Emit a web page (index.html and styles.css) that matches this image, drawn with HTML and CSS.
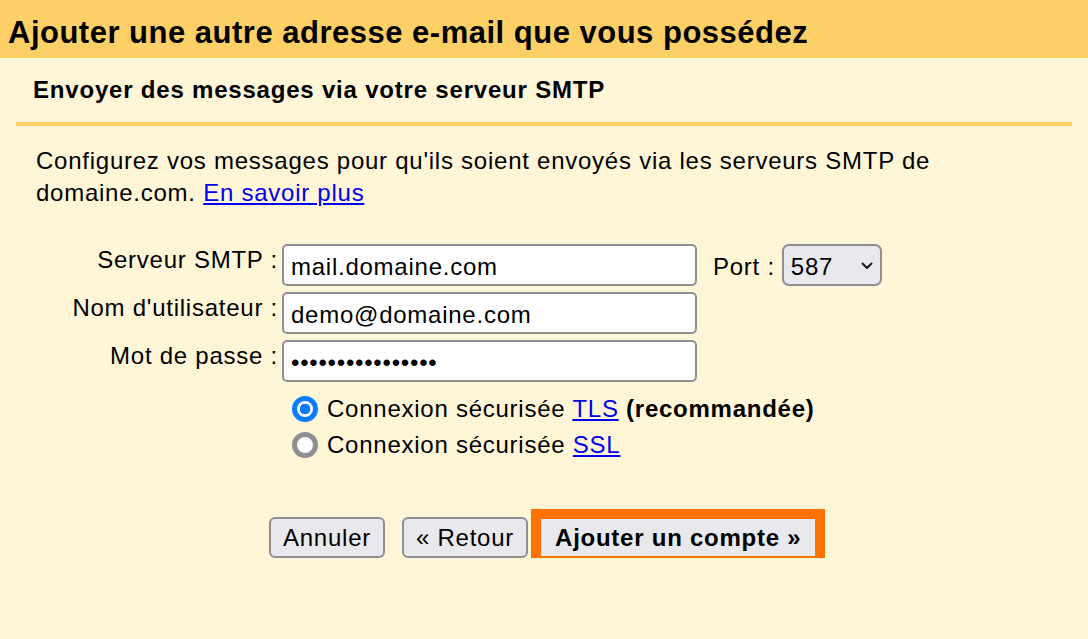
FILE: index.html
```html
<!DOCTYPE html>
<html lang="fr">
<head>
<meta charset="utf-8">
<title>Ajouter une autre adresse e-mail que vous possédez</title>
<link rel="stylesheet" href="styles.css">
</head>
<body>
<header class="top">
  <h1 class="title">Ajouter une autre adresse e-mail que vous possédez</h1>
</header>
<main class="panel">
  <h2 class="subtitle">Envoyer des messages via votre serveur SMTP</h2>
  <p class="intro">Configurez vos messages pour qu'ils soient envoyés via les serveurs SMTP de domaine.com. <a class="link" href="#">En savoir plus</a></p>
  <form class="form">
    <div class="row">
      <label class="label" for="smtp">Serveur SMTP :</label>
      <input class="field" id="smtp" type="text" value="mail.domaine.com">
      <span class="port-label">Port :</span>
      <div class="select-wrap">
        <select class="select"><option>587</option><option>465</option><option>25</option></select>
        <svg class="chevron" width="12" height="8" viewBox="0 0 12 8"><path d="M1.5 1.5 L6 6 L10.5 1.5" fill="none" stroke="#1a1a1a" stroke-width="2" stroke-linecap="round" stroke-linejoin="round"/></svg>
      </div>
    </div>
    <div class="row">
      <label class="label" for="user">Nom d'utilisateur :</label>
      <input class="field" id="user" type="text" value="demo@domaine.com">
    </div>
    <div class="row">
      <label class="label" for="pass">Mot de passe :</label>
      <input class="field" id="pass" type="password" value="motdepasse123456">
    </div>
    <div class="radios">
      <label class="radio-row"><input class="radio" type="radio" name="sec" checked><span class="radio-text">Connexion sécurisée <a class="link" href="#">TLS</a> <b>(recommandée)</b></span></label>
      <label class="radio-row"><input class="radio" type="radio" name="sec"><span class="radio-text">Connexion sécurisée <a class="link" href="#">SSL</a></span></label>
    </div>
    <div class="actions">
      <button class="btn" type="button">Annuler</button>
      <button class="btn btn-back" type="button">« Retour</button>
      <button class="btn btn-primary" type="button">Ajouter un compte »</button>
    </div>
  </form>
</main>
</body>
</html>
```
FILE: styles.css
```css
html, body {
  margin: 0;
  padding: 0;
}
body {
  background: #fff6d8;
  font-family: "Liberation Sans", Arial, sans-serif;
  font-size: 24px;
  letter-spacing: 0.75px;
  color: #000;
}
.top {
  background: #fcd066;
  height: 58px;
  padding-left: 8px;
}
.title {
  margin: 0;
  padding-top: 7px;
  font-size: 31px;
  line-height: 51px;
  font-weight: bold;
  letter-spacing: 0.5px;
  white-space: nowrap;
}
.panel {
  margin: 0 16px;
}
.subtitle {
  margin: 0;
  padding: 16px 17px;
  font-size: 24px;
  line-height: 32px;
  font-weight: bold;
  letter-spacing: 0.8px;
  border-bottom: 4px solid #fcd066;
}
.intro {
  margin: 19px 0 0;
  padding: 0 20px;
  line-height: 32px;
}
.link {
  color: #0000ee;
  text-decoration: underline;
}
.form {
  margin-top: 35px;
  padding-left: 20px;
}
.row {
  display: flex;
  align-items: flex-start;
  margin-bottom: 6px;
}
.label {
  width: 242px;
  text-align: right;
  line-height: 32px;
}
.field {
  display: block;
  width: 415px;
  height: 42px;
  box-sizing: border-box;
  margin: 0 0 0 4px;
  padding: 3px 7px 0;
  border: 2px solid #8e8e93;
  border-radius: 5px;
  background: #fff;
  font: inherit;
  letter-spacing: inherit;
  color: #000;
  outline: none;
}
.port-label {
  margin-left: 16px;
  padding-top: 3px;
  line-height: 39px;
}
.select-wrap {
  position: relative;
  display: flex;
  margin-left: 7px;
}
.select {
  display: block;
  appearance: none;
  -webkit-appearance: none;
  width: 100px;
  height: 42px;
  box-sizing: border-box;
  margin: 0;
  padding: 3px 0 0 7px;
  border: 2px solid #8e8e93;
  border-radius: 7px;
  background: #e9e9ed;
  font: inherit;
  letter-spacing: inherit;
  color: #000;
}
.chevron {
  position: absolute;
  right: 9px;
  top: 18px;
  pointer-events: none;
}
.radios {
  margin: 9px 0 0 256px;
}
.radio-row {
  display: flex;
  align-items: center;
  height: 36px;
}
.radio {
  appearance: none;
  -webkit-appearance: none;
  flex: none;
  width: 26px;
  height: 26px;
  box-sizing: border-box;
  margin: 0 9px 0 0;
  border-radius: 50%;
  border: 5px solid #8e8e93;
  background: #fff;
}
.radio:checked {
  border-color: #0a7bff;
  background: radial-gradient(circle, #0a7bff 0 5px, #fff 5.6px);
}
.radio-text {
  line-height: 36px;
  white-space: nowrap;
}
.actions {
  display: flex;
  align-items: flex-start;
  margin-top: 54px;
  padding-left: 233px;
}
.btn {
  display: block;
  height: 41px;
  box-sizing: border-box;
  margin: 0;
  padding: 0 12px;
  border: 2px solid #8e8e93;
  border-radius: 6px;
  background: #e9e9ed;
  font: inherit;
  letter-spacing: inherit;
  color: #000;
}
.btn-back {
  margin-left: 17px;
}
.btn-primary {
  margin-left: 11px;
  padding: 0 14px;
  font-weight: bold;
  border-radius: 0;
  outline: 10px solid #ff7200;
  outline-offset: -2px;
}
```
